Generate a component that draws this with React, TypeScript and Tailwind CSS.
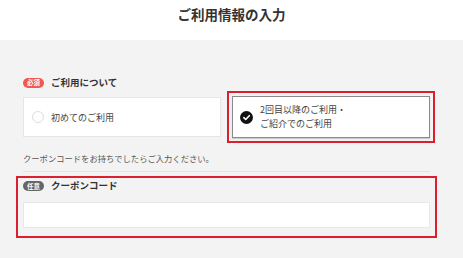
import React from "react";

const font = { fontFamily: '"Noto Sans CJK JP", "Noto Sans", sans-serif' };

function Badge({ label, tone }: { label: string; tone: "red" | "gray" }) {
  return (
    <span
      className={
        "flex h-[10px] w-[21px] items-center justify-center rounded-full text-[6.5px] leading-none font-bold text-white " +
        (tone === "red" ? "bg-[#ee5a52]" : "bg-[#666666]")
      }
    >
      {label}
    </span>
  );
}

export default function App() {
  return (
    <div className="w-[463px] h-[258px] overflow-hidden bg-[#f3f3f3] text-[#333333]" style={font}>
      <div className="h-[40px] bg-white flex justify-center pt-[4px]">
        <h1 className="text-[13.5px] leading-[20px] font-bold text-[#333333]">ご利用情報の入力</h1>
      </div>
      <div className="pl-[23px] pr-[33px] pt-[36px]">
        <div className="flex h-[13px] items-center gap-[7px]">
          <Badge label="必須" tone="red" />
          <span className="text-[9.5px] font-bold leading-none">ご利用について</span>
        </div>
        <div className="mt-[7px] grid h-[42px] grid-cols-2 items-center gap-[11px]">
          <div className="flex h-[40px] items-center gap-[7px] border border-[#e6e6e6] bg-white pl-[8px]">
            <span className="h-[12px] w-[12px] rounded-full border border-[#dddddd] bg-white"></span>
            <span className="text-[9px] leading-none text-[#444444]">初めてのご利用</span>
          </div>
          <div className="-m-[5px] border-2 border-[#dc1f2e] p-[3px]">
            <div className="flex h-[42px] items-center gap-[7px] border border-[#8a8a8a] bg-white pl-[7px] shadow-[0_1px_1px_rgba(0,0,0,0.15)]">
              <svg width="13" height="13" viewBox="0 0 13 13">
                <circle cx="6.5" cy="6.5" r="6.5" fill="#111111" />
                <path d="M3.8 6.7 L5.7 8.5 L9.3 4.7" fill="none" stroke="#ffffff" strokeWidth="1.6" strokeLinecap="round" strokeLinejoin="round" />
              </svg>
              <span className="text-[9px] leading-[14px] text-[#444444]">
                2回目以降のご利用・
                <br />
                ご紹介でのご利用
              </span>
            </div>
          </div>
        </div>
        <p className="mt-[14px] text-[8.3px] leading-[12px] text-[#555555]">クーポンコードをお持ちでしたらご入力ください。</p>
        <div className="mt-[7px] h-px bg-[#e3e3e3]"></div>
        <div className="-mx-[7px] mt-[4px] border-2 border-[#dc1f2e] px-[5px] pt-[2px] pb-[8px]">
          <div className="flex h-[12px] items-center gap-[7px]">
            <Badge label="任意" tone="gray" />
            <span className="text-[9.5px] font-bold leading-none">クーポンコード</span>
          </div>
          <input className="mt-[10px] block h-[26px] w-full border border-[#e8e8e8] bg-white outline-none" />
        </div>
      </div>
    </div>
  );
}
